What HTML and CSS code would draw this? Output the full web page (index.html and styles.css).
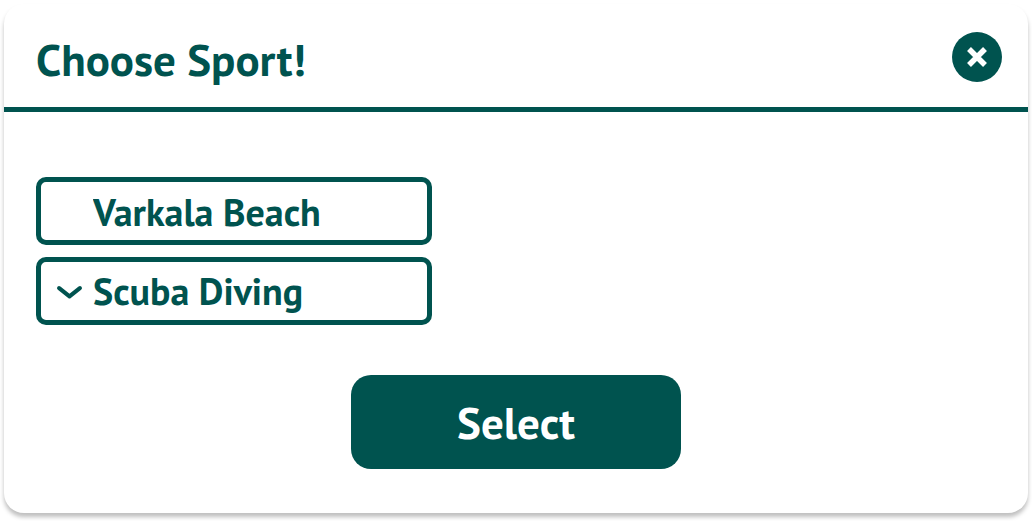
FILE: index.html
```html
<!DOCTYPE html>
<html lang="en">
<head>
<meta charset="utf-8">
<title>Choose Sport</title>
<link rel="stylesheet" href="styles.css">
</head>
<body>
<section class="dialog" role="dialog" aria-labelledby="dialog-title">
  <header class="dialog-header">
    <h1 class="dialog-title" id="dialog-title">Choose Sport!</h1>
    <button class="close" type="button" aria-label="Close">
      <svg class="close-icon" viewBox="0 0 50 50" aria-hidden="true"><path d="M17 17 33 33M33 17 17 33"/></svg>
    </button>
  </header>
  <form class="dialog-body">
    <div class="fields">
      <input class="field" type="text" value="Varkala Beach" aria-label="Beach">
      <div class="select-wrap">
        <select class="field" aria-label="Sport"><option>Scuba Diving</option></select>
        <svg class="chevron" viewBox="0 0 26 14" aria-hidden="true"><path d="M3 3 13 11 23 3"/></svg>
      </div>
    </div>
    <button class="submit" type="button">Select</button>
  </form>
</section>
</body>
</html>
```

FILE: styles.css
```css
* { box-sizing: border-box; }

body {
  margin: 0;
  padding: 4px 4px 8px;
  background: #fff;
  color: #00534f;
  font-family: "PT Sans", "Noto Sans", sans-serif;
}

.dialog {
  background: #fff;
  border-radius: 20px;
  box-shadow: 0 4px 4px rgba(0, 0, 0, 0.25);
}

.dialog-header {
  display: flex;
  align-items: flex-start;
  justify-content: space-between;
  padding: 28px 26px 21px 32px;
  border-bottom: 5px solid #00534f;
}

.dialog-title {
  margin: 0;
  font-size: 45px;
  line-height: 54px;
  font-weight: 700;
}

.close {
  flex: none;
  width: 50px;
  height: 50px;
  padding: 0;
  border: 0;
  border-radius: 50%;
  background: #00534f;
}

.close-icon {
  display: block;
  fill: none;
  stroke: #fff;
  stroke-width: 5.5;
}

.dialog-body {
  display: flex;
  flex-direction: column;
  padding: 65px 32px 44px;
}

.fields {
  display: flex;
  flex-direction: column;
  gap: 12px;
  max-width: 396px;
}

.select-wrap {
  position: relative;
}

.field {
  display: block;
  appearance: none;
  width: 100%;
  height: 68px;
  padding: 0 16px 0 52px;
  border: 5px solid #00534f;
  border-radius: 10px;
  background: #fff;
  color: inherit;
  font: 700 38px/50px "PT Sans", "Noto Sans", sans-serif;
}

.chevron {
  position: absolute;
  left: 20px;
  top: 28px;
  width: 27px;
  fill: none;
  stroke: #00534f;
  stroke-width: 4;
  stroke-linecap: round;
  stroke-linejoin: round;
  pointer-events: none;
}

.submit {
  align-self: center;
  width: 330px;
  max-width: 100%;
  margin-top: 50px;
  padding: 20px;
  border: 0;
  border-radius: 20px;
  background: #00534f;
  color: #fff;
  font: 700 45px/54px "PT Sans", "Noto Sans", sans-serif;
}
```
